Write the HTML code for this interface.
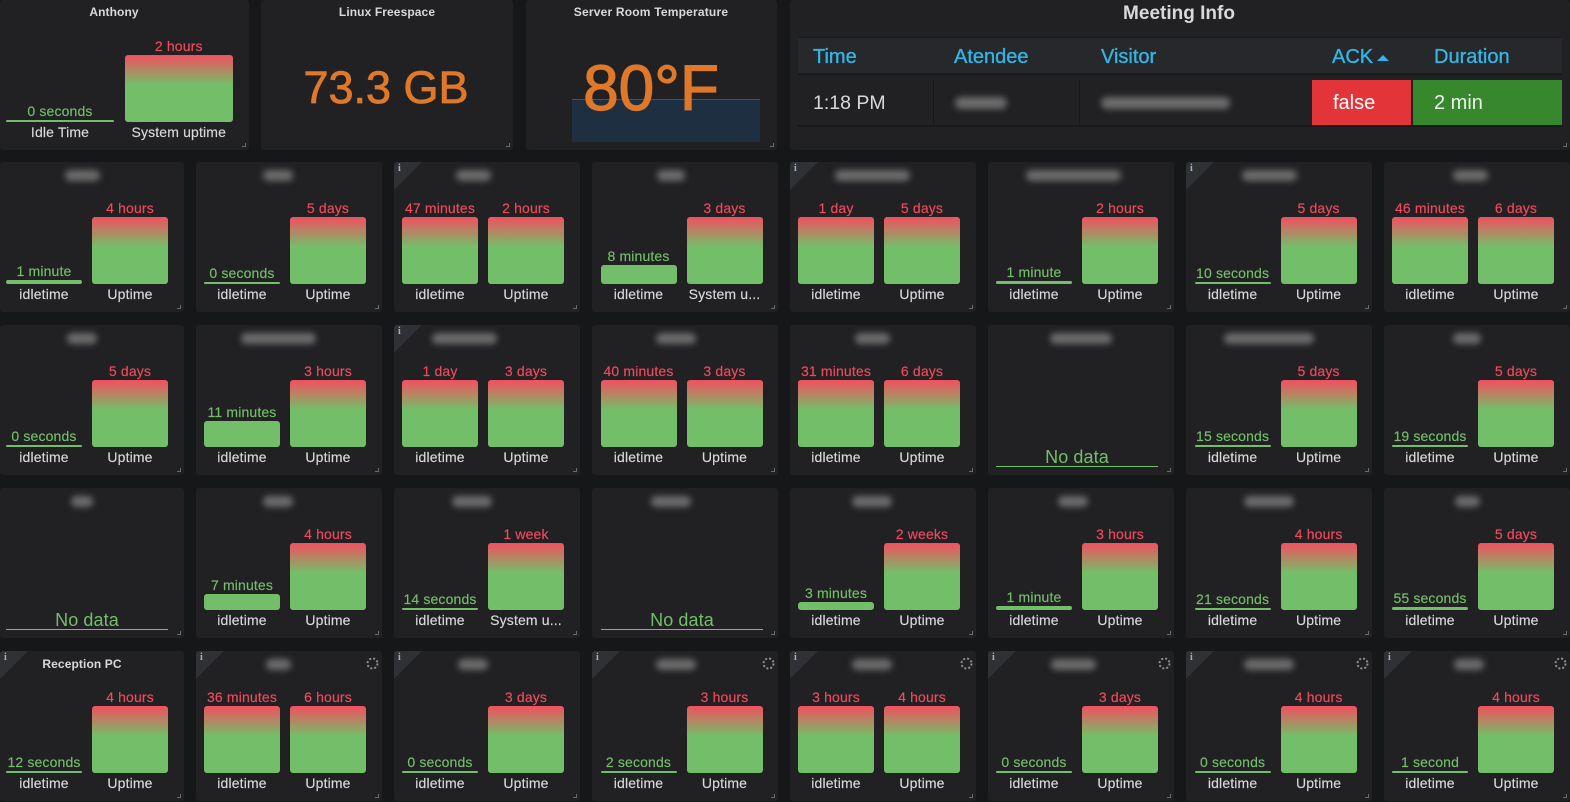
<!DOCTYPE html>
<html><head><meta charset="utf-8"><style>
html,body{margin:0;padding:0;background:#161719;width:1570px;height:802px;overflow:hidden}
body{position:relative;font-family:"Liberation Sans",sans-serif;color:#d8d9da;font-size:14px}
.p{position:absolute;background:#212124;border-radius:3px;height:150px;width:186px;--o:8px;overflow:hidden}
.y1{top:162px}.y2{top:325px}.y3{top:488px}.y4{top:651px}
.x1{left:0;width:184px;--o:6px}.x2{left:196px}.x3{left:394px}.x4{left:592px;--o:8.5px}.x5{left:790px}.x6{left:988px}.x7{left:1186px;--o:8.6px}.x8{left:1384px;--o:8px}
.t{position:absolute;top:3px;left:0;width:164px;height:20px;line-height:20px;text-align:center;font-size:12px;font-weight:bold;letter-spacing:.1px}
.bl{display:inline-block;height:11px;background:#6c6c6c;border-radius:6px;filter:blur(3.2px);vertical-align:middle}
.c{position:absolute;top:0;bottom:7.5px;width:76px;display:flex;flex-direction:column;justify-content:flex-end;align-items:center;text-align:center;white-space:nowrap;letter-spacing:.15px;-webkit-text-stroke:.15px currentColor}
.a{left:var(--o)}.b{left:calc(var(--o) + 86px)}
.v{line-height:18px;color:#73bf69}
.v.r{color:#f2495c}
.l{line-height:21px}
.g,.f{width:100%;border-radius:3px;background:#73bf69}
.g{height:66.5px;background:linear-gradient(#f2505f 0,#73bf69 45%)}
.f1{height:2px;border-radius:1px}
.nd{position:absolute;left:8px;width:162px;top:123px;height:18px;line-height:18px;text-align:center;color:#73bf69;font-size:18px;border-bottom:1.5px solid #73bf69;letter-spacing:.1px}
.h{position:absolute;right:3px;bottom:3px;width:4px;height:4px;border-right:1.5px solid #6a6a6a;border-bottom:1.5px solid #6a6a6a;box-sizing:border-box}
.in{position:absolute;left:0;top:0;width:0;height:0;border-top:28px solid #303134;border-right:28px solid transparent}
.ii{position:absolute;left:4px;top:0;font:bold 10px/13px "Liberation Serif",serif;color:#9fb4c8}
.s{position:absolute;right:3px;top:6px;width:13px;height:13px}
.m{position:absolute;font-size:20px;line-height:22px;white-space:nowrap}
.bu{color:#33b5e5;top:46px;-webkit-text-stroke:.35px #33b5e5}
</style></head><body>

<div class="p" style="left:0;top:0;width:249px"><div class="t" style="width:228px;top:2px">Anthony</div>
<div class="c" style="left:6px;width:108px"><div class="v">0 seconds</div><div class="f f1"></div><div class="l">Idle Time</div></div>
<div class="c" style="left:124.5px;width:108.5px"><div class="v r">2 hours</div><div class="g"></div><div class="l">System uptime</div></div><div class="h"></div></div>

<div class="p" style="left:261px;top:0;width:252px"><div class="t" style="width:252px;top:2px">Linux Freespace</div>
<div style="position:absolute;left:0;width:250px;top:62px;line-height:52px;text-align:center;font-size:45px;color:#e0782a;-webkit-text-stroke:.8px #e0782a">73.3 GB</div><div class="h"></div></div>

<div class="p" style="left:526px;top:0;width:251px"><div class="t" style="width:250px;top:2px;letter-spacing:.2px">Server Room Temperature</div>
<div style="position:absolute;left:46px;top:99px;width:188px;height:43px;background:#1f2f42;border-top:1.5px solid #2c5a85;box-sizing:border-box"></div>
<div style="position:absolute;left:0;width:250px;top:50px;line-height:76px;text-align:center;font-size:64px;color:#e0782a;-webkit-text-stroke:1.2px #e0782a">80°F</div><div class="h"></div></div>

<div class="p" style="left:790px;top:0;width:780px"><div class="m" style="left:0;width:778px;text-align:center;top:3px;font-weight:bold;font-size:19px">Meeting Info</div>
<div style="position:absolute;left:8px;top:37px;width:764px;height:38px;background:#27282b;border-top:1px solid #18191b;border-bottom:2px solid #18191b;box-sizing:border-box"></div>
<div style="position:absolute;left:8px;top:125px;width:764px;height:1.5px;background:#18191b"></div>
<div style="position:absolute;left:143px;top:80px;width:1px;height:45px;background:#18191b"></div>
<div style="position:absolute;left:289px;top:80px;width:1px;height:45px;background:#18191b"></div>
<div class="m bu" style="left:23px">Time</div><div class="m bu" style="left:164px">Atendee</div><div class="m bu" style="left:311px">Visitor</div><div class="m bu" style="left:542px">ACK</div><div style="position:absolute;left:587px;top:55px;width:0;height:0;border-left:6px solid transparent;border-right:6px solid transparent;border-bottom:6px solid #33b5e5"></div><div class="m bu" style="left:644px">Duration</div>
<div class="m" style="left:23px;top:92px;font-size:19.5px">1:18 PM</div>
<i class="bl" style="position:absolute;left:165px;top:97px;width:52px;height:12px"></i>
<i class="bl" style="position:absolute;left:311px;top:97px;width:129px;height:12px"></i>
<div class="m" style="left:522px;top:80px;width:99px;height:45px;line-height:47px;background:#e33539;color:#fff;text-indent:21px">false</div>
<div class="m" style="left:623px;top:80px;width:149px;height:45px;line-height:47px;background:#37872d;color:#f0f0f0;text-indent:21px">2 min</div><div class="h"></div></div>

<!-- row 1 -->
<div class="p y1 x1"><div class="t"><i class="bl" style="width:35px"></i></div><div class="c a"><div class="v">1 minute</div><div class="f" style="height:4px"></div><div class="l">idletime</div></div><div class="c b"><div class="v r">4 hours</div><div class="g"></div><div class="l">Uptime</div></div><div class="h"></div></div>
<div class="p y1 x2"><div class="t"><i class="bl" style="width:30px"></i></div><div class="c a"><div class="v">0 seconds</div><div class="f f1"></div><div class="l">idletime</div></div><div class="c b"><div class="v r">5 days</div><div class="g"></div><div class="l">Uptime</div></div><div class="h"></div></div>
<div class="p y1 x3"><div class="in"></div><div class="ii">i</div><div class="t" style="width:158px"><i class="bl" style="width:35px"></i></div><div class="c a"><div class="v r">47 minutes</div><div class="g"></div><div class="l">idletime</div></div><div class="c b"><div class="v r">2 hours</div><div class="g"></div><div class="l">Uptime</div></div><div class="h"></div></div>
<div class="p y1 x4"><div class="t" style="width:158px"><i class="bl" style="width:28px"></i></div><div class="c a"><div class="v">8 minutes</div><div class="f" style="height:19px"></div><div class="l">idletime</div></div><div class="c b"><div class="v r">3 days</div><div class="g"></div><div class="l">System u...</div></div><div class="h"></div></div>
<div class="p y1 x5"><div class="in"></div><div class="ii">i</div><div class="t"><i class="bl" style="width:75px"></i></div><div class="c a"><div class="v r">1 day</div><div class="g"></div><div class="l">idletime</div></div><div class="c b"><div class="v r">5 days</div><div class="g"></div><div class="l">Uptime</div></div><div class="h"></div></div>
<div class="p y1 x6"><div class="t" style="width:170px"><i class="bl" style="width:95px"></i></div><div class="c a"><div class="v">1 minute</div><div class="f" style="height:3px"></div><div class="l">idletime</div></div><div class="c b"><div class="v r">2 hours</div><div class="g"></div><div class="l">Uptime</div></div><div class="h"></div></div>
<div class="p y1 x7"><div class="in"></div><div class="ii">i</div><div class="t" style="width:166px"><i class="bl" style="width:55px"></i></div><div class="c a"><div class="v">10 seconds</div><div class="f f1"></div><div class="l">idletime</div></div><div class="c b"><div class="v r">5 days</div><div class="g"></div><div class="l">Uptime</div></div><div class="h"></div></div>
<div class="p y1 x8"><div class="t" style="width:172px"><i class="bl" style="width:35px"></i></div><div class="c a"><div class="v r">46 minutes</div><div class="g"></div><div class="l">idletime</div></div><div class="c b"><div class="v r">6 days</div><div class="g"></div><div class="l">Uptime</div></div><div class="h"></div></div>

<!-- row 2 -->
<div class="p y2 x1"><div class="t"><i class="bl" style="width:30px"></i></div><div class="c a"><div class="v">0 seconds</div><div class="f f1"></div><div class="l">idletime</div></div><div class="c b"><div class="v r">5 days</div><div class="g"></div><div class="l">Uptime</div></div><div class="h"></div></div>
<div class="p y2 x2"><div class="t"><i class="bl" style="width:75px"></i></div><div class="c a"><div class="v">11 minutes</div><div class="f" style="height:26px"></div><div class="l">idletime</div></div><div class="c b"><div class="v r">3 hours</div><div class="g"></div><div class="l">Uptime</div></div><div class="h"></div></div>
<div class="p y2 x3"><div class="in"></div><div class="ii">i</div><div class="t" style="width:140px"><i class="bl" style="width:65px"></i></div><div class="c a"><div class="v r">1 day</div><div class="g"></div><div class="l">idletime</div></div><div class="c b"><div class="v r">3 days</div><div class="g"></div><div class="l">Uptime</div></div><div class="h"></div></div>
<div class="p y2 x4"><div class="t" style="width:168px"><i class="bl" style="width:40px"></i></div><div class="c a"><div class="v r">40 minutes</div><div class="g"></div><div class="l">idletime</div></div><div class="c b"><div class="v r">3 days</div><div class="g"></div><div class="l">Uptime</div></div><div class="h"></div></div>
<div class="p y2 x5"><div class="t"><i class="bl" style="width:35px"></i></div><div class="c a"><div class="v r">31 minutes</div><div class="g"></div><div class="l">idletime</div></div><div class="c b"><div class="v r">6 days</div><div class="g"></div><div class="l">Uptime</div></div><div class="h"></div></div>
<div class="p y2 x6"><div class="t" style="width:186px"><i class="bl" style="width:62px"></i></div><div class="nd">No data</div><div class="h"></div></div>
<div class="p y2 x7"><div class="t" style="width:166px"><i class="bl" style="width:90px"></i></div><div class="c a"><div class="v">15 seconds</div><div class="f f1"></div><div class="l">idletime</div></div><div class="c b"><div class="v r">5 days</div><div class="g"></div><div class="l">Uptime</div></div><div class="h"></div></div>
<div class="p y2 x8"><div class="t" style="width:166px"><i class="bl" style="width:28px"></i></div><div class="c a"><div class="v">19 seconds</div><div class="f f1"></div><div class="l">idletime</div></div><div class="c b"><div class="v r">5 days</div><div class="g"></div><div class="l">Uptime</div></div><div class="h"></div></div>

<!-- row 3 -->
<div class="p y3 x1"><div class="t"><i class="bl" style="width:22px"></i></div><div class="nd" style="left:6px">No data</div><div class="h"></div></div>
<div class="p y3 x2"><div class="t"><i class="bl" style="width:30px"></i></div><div class="c a"><div class="v">7 minutes</div><div class="f" style="height:16px"></div><div class="l">idletime</div></div><div class="c b"><div class="v r">4 hours</div><div class="g"></div><div class="l">Uptime</div></div><div class="h"></div></div>
<div class="p y3 x3"><div class="t" style="width:156px"><i class="bl" style="width:40px"></i></div><div class="c a"><div class="v">14 seconds</div><div class="f f1"></div><div class="l">idletime</div></div><div class="c b"><div class="v r">1 week</div><div class="g"></div><div class="l">System u...</div></div><div class="h"></div></div>
<div class="p y3 x4"><div class="t" style="width:158px"><i class="bl" style="width:40px"></i></div><div class="nd" style="left:9px">No data</div><div class="h"></div></div>
<div class="p y3 x5"><div class="t"><i class="bl" style="width:40px"></i></div><div class="c a"><div class="v">3 minutes</div><div class="f" style="height:8px"></div><div class="l">idletime</div></div><div class="c b"><div class="v r">2 weeks</div><div class="g"></div><div class="l">Uptime</div></div><div class="h"></div></div>
<div class="p y3 x6"><div class="t" style="width:170px"><i class="bl" style="width:30px"></i></div><div class="c a"><div class="v">1 minute</div><div class="f" style="height:4px"></div><div class="l">idletime</div></div><div class="c b"><div class="v r">3 hours</div><div class="g"></div><div class="l">Uptime</div></div><div class="h"></div></div>
<div class="p y3 x7"><div class="t" style="width:166px"><i class="bl" style="width:50px"></i></div><div class="c a"><div class="v">21 seconds</div><div class="f f1"></div><div class="l">idletime</div></div><div class="c b"><div class="v r">4 hours</div><div class="g"></div><div class="l">Uptime</div></div><div class="h"></div></div>
<div class="p y3 x8"><div class="t" style="width:166px"><i class="bl" style="width:25px"></i></div><div class="c a"><div class="v">55 seconds</div><div class="f" style="height:3px"></div><div class="l">idletime</div></div><div class="c b"><div class="v r">5 days</div><div class="g"></div><div class="l">Uptime</div></div><div class="h"></div></div>

<!-- row 4 -->
<div class="p y4 x1"><div class="in"></div><div class="ii">i</div><div class="t">Reception PC</div><div class="c a"><div class="v">12 seconds</div><div class="f f1"></div><div class="l">idletime</div></div><div class="c b"><div class="v r">4 hours</div><div class="g"></div><div class="l">Uptime</div></div><div class="h"></div></div>
<div class="p y4 x2"><div class="in"></div><div class="ii">i</div><svg class="s" viewBox="0 0 13 13"><circle cx="6.5" cy="6.5" r="5" fill="none" stroke="#8f8f8f" stroke-width="2" stroke-dasharray="2 2"/></svg><div class="t"><i class="bl" style="width:25px"></i></div><div class="c a"><div class="v r">36 minutes</div><div class="g"></div><div class="l">idletime</div></div><div class="c b"><div class="v r">6 hours</div><div class="g"></div><div class="l">Uptime</div></div><div class="h"></div></div>
<div class="p y4 x3"><div class="in"></div><div class="ii">i</div><div class="t" style="width:158px"><i class="bl" style="width:30px"></i></div><div class="c a"><div class="v">0 seconds</div><div class="f f1"></div><div class="l">idletime</div></div><div class="c b"><div class="v r">3 days</div><div class="g"></div><div class="l">Uptime</div></div><div class="h"></div></div>
<div class="p y4 x4"><div class="in"></div><div class="ii">i</div><svg class="s" viewBox="0 0 13 13"><circle cx="6.5" cy="6.5" r="5" fill="none" stroke="#8f8f8f" stroke-width="2" stroke-dasharray="2 2"/></svg><div class="t" style="width:168px"><i class="bl" style="width:40px"></i></div><div class="c a"><div class="v">2 seconds</div><div class="f f1"></div><div class="l">idletime</div></div><div class="c b"><div class="v r">3 hours</div><div class="g"></div><div class="l">Uptime</div></div><div class="h"></div></div>
<div class="p y4 x5"><div class="in"></div><div class="ii">i</div><svg class="s" viewBox="0 0 13 13"><circle cx="6.5" cy="6.5" r="5" fill="none" stroke="#8f8f8f" stroke-width="2" stroke-dasharray="2 2"/></svg><div class="t"><i class="bl" style="width:40px"></i></div><div class="c a"><div class="v r">3 hours</div><div class="g"></div><div class="l">idletime</div></div><div class="c b"><div class="v r">4 hours</div><div class="g"></div><div class="l">Uptime</div></div><div class="h"></div></div>
<div class="p y4 x6"><div class="in"></div><div class="ii">i</div><svg class="s" viewBox="0 0 13 13"><circle cx="6.5" cy="6.5" r="5" fill="none" stroke="#8f8f8f" stroke-width="2" stroke-dasharray="2 2"/></svg><div class="t" style="width:170px"><i class="bl" style="width:45px"></i></div><div class="c a"><div class="v">0 seconds</div><div class="f f1"></div><div class="l">idletime</div></div><div class="c b"><div class="v r">3 days</div><div class="g"></div><div class="l">Uptime</div></div><div class="h"></div></div>
<div class="p y4 x7"><div class="in"></div><div class="ii">i</div><svg class="s" viewBox="0 0 13 13"><circle cx="6.5" cy="6.5" r="5" fill="none" stroke="#8f8f8f" stroke-width="2" stroke-dasharray="2 2"/></svg><div class="t" style="width:166px"><i class="bl" style="width:50px"></i></div><div class="c a"><div class="v">0 seconds</div><div class="f f1"></div><div class="l">idletime</div></div><div class="c b"><div class="v r">4 hours</div><div class="g"></div><div class="l">Uptime</div></div><div class="h"></div></div>
<div class="p y4 x8"><div class="in"></div><div class="ii">i</div><svg class="s" viewBox="0 0 13 13"><circle cx="6.5" cy="6.5" r="5" fill="none" stroke="#8f8f8f" stroke-width="2" stroke-dasharray="2 2"/></svg><div class="t" style="width:170px"><i class="bl" style="width:30px"></i></div><div class="c a"><div class="v">1 second</div><div class="f f1"></div><div class="l">idletime</div></div><div class="c b"><div class="v r">4 hours</div><div class="g"></div><div class="l">Uptime</div></div><div class="h"></div></div>

</body></html>
